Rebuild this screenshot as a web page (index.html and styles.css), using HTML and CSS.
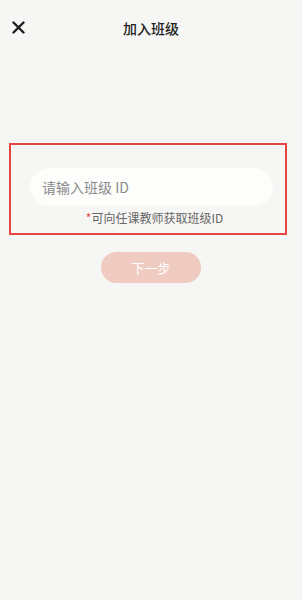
FILE: index.html
```html
<!DOCTYPE html>
<html>
<head>
  <meta charset="UTF-8">
  <meta name="viewport" content="width=device-width, initial-scale=1.0">
  <title>加入班级</title>
  <link rel="stylesheet" href="styles.css">
</head>
<body>
  <div class="header">
    <button class="close-btn" aria-label="关闭">
      <svg width="13" height="13" viewBox="0 0 13 13">
        <path d="M1.5 1.5L11.5 11.5M11.5 1.5L1.5 11.5" stroke="#1e1e1e" stroke-width="2.4" stroke-linecap="round"/>
      </svg>
    </button>
    <h1 class="title">加入班级</h1>
  </div>

  <div class="join-box">
    <input type="text" class="class-input" placeholder="请输入班级 ID">
    <p class="hint"><span class="star">*</span>可向任课教师获取班级ID</p>
  </div>

  <div class="actions">
    <button class="btn-next">下一步</button>
  </div>
</body>
</html>
```

FILE: styles.css
```css
* {
  margin: 0;
  padding: 0;
  box-sizing: border-box;
  font-family: 'Noto Sans CJK SC', 'Noto Sans', sans-serif;
}

body {
  background: #f6f6f4;
  color: #222;
  min-height: 100vh;
}

.header {
  position: relative;
  height: 56px;
  display: flex;
  align-items: center;
  justify-content: center;
}

.close-btn {
  position: absolute;
  left: 11px;
  top: 20px;
  width: 15px;
  height: 15px;
  border: none;
  background: none;
  display: flex;
  align-items: center;
  justify-content: center;
}

.title {
  font-size: 14px;
  font-weight: 500;
  color: #222;
  margin-top: 0;
}

.join-box {
  margin: 87px 15px 0 9px;
  height: 92px;
  border: 2px solid #e2463f;
  padding: 23px 12px 0 19px;
}

.class-input {
  width: 100%;
  height: 38px;
  border: none;
  border-radius: 19px;
  background: #fdfdfc;
  padding: 0 12px;
  font-size: 14px;
  color: #333;
  outline: none;
}

.class-input::placeholder {
  color: #8a8a8a;
}

.hint {
  margin-top: 3px;
  text-align: center;
  font-size: 12px;
  color: #666;
  padding-left: 6px;
}

.star {
  color: #e2463f;
}

.actions {
  display: flex;
  justify-content: center;
  margin-top: 17px;
}

.btn-next {
  width: 100px;
  height: 31px;
  border: none;
  border-radius: 16px;
  background: #efcbc2;
  color: #fff;
  font-size: 13px;
}
```
